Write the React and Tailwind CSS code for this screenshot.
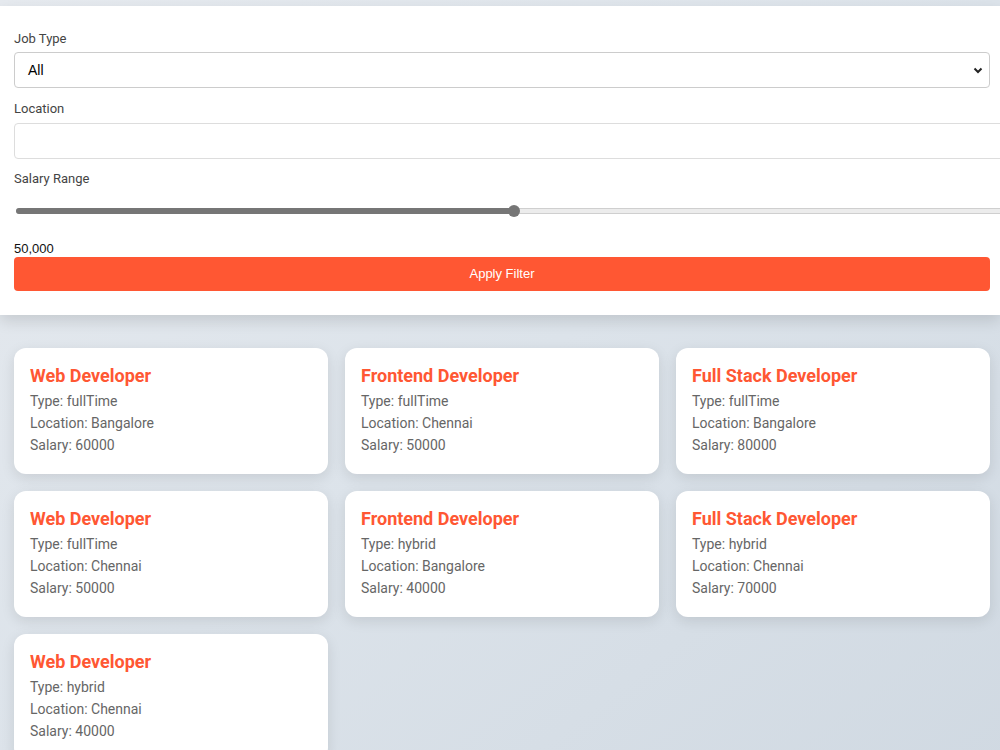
import React from "react";

const jobs = [
  { title: "Web Developer", type: "fullTime", location: "Bangalore", salary: 60000 },
  { title: "Frontend Developer", type: "fullTime", location: "Chennai", salary: 50000 },
  { title: "Full Stack Developer", type: "fullTime", location: "Bangalore", salary: 80000 },
  { title: "Web Developer", type: "fullTime", location: "Chennai", salary: 50000 },
  { title: "Frontend Developer", type: "hybrid", location: "Bangalore", salary: 40000 },
  { title: "Full Stack Developer", type: "hybrid", location: "Chennai", salary: 70000 },
  { title: "Web Developer", type: "hybrid", location: "Chennai", salary: 40000 },
];

export default function App() {
  return (
    <div className="min-h-[750px] w-full overflow-hidden bg-gradient-to-br from-[#e6eaef] via-[#dce3ea] to-[#d0d9e2] pt-[6px] font-['Roboto',sans-serif]">
      <div className="bg-white pl-[14px] pr-[10px] pt-[22px] pb-[24px] shadow-[0_6px_14px_rgba(0,0,0,0.12)]">
        <div className="pt-[1px] text-[13px] leading-[19px] text-[#444]">Job Type</div>
        <div className="mt-[4px] flex h-[36px] items-center justify-between rounded-[4px] border border-[#ccc] bg-white pl-[13px] pr-[4px] font-['Liberation_Sans',Arial,sans-serif] text-[14px] text-black">
          <span className="pt-[1px]">All</span>
          <svg width="12" height="12" viewBox="0 0 12 12" className="mr-[1px]">
            <path d="M2.5 4.5 L6 8 L9.5 4.5" fill="none" stroke="#222" strokeWidth="2" />
          </svg>
        </div>
        <div className="mt-[11px] text-[13px] leading-5 text-[#444]">Location</div>
        <div className="mt-[4px] h-[36px] w-[calc(100%+30px)] rounded-[4px] border border-[#ddd] bg-white"></div>
        <div className="mt-[10px] text-[13px] leading-5 text-[#444]">Salary Range</div>
        <div className="relative mt-[16px] ml-[2px] h-[12px] w-[calc(100%+40px)]">
          <div className="absolute left-0 right-0 top-[3px] h-[6px] rounded-full border border-[#cfcfcf] bg-[#ececec]"></div>
          <div className="absolute left-0 top-[3px] h-[6px] w-[498px] rounded-full bg-[#767676]"></div>
          <div className="absolute left-[492px] top-0 h-[12px] w-[12px] rounded-full bg-[#767676]"></div>
        </div>
        <div className="mt-[24px] font-['Liberation_Sans',Arial,sans-serif] text-[13px] leading-[15px] text-[#111]">50,000</div>
        <div className="mt-[1px] flex h-[34px] items-center justify-center rounded-[4px] bg-[#ff5733] font-['Liberation_Sans',Arial,sans-serif] text-[13px] text-white">
          Apply Filter
        </div>
      </div>

      <div className="grid grid-cols-3 gap-[17px] pl-[14px] pr-[10px] pt-[33px] pb-[20px]">
        {jobs.map((j, i) => (
          <div key={i} className="h-[126px] rounded-[12px] bg-white px-[16px] pt-[17px] shadow-[0_4px_14px_rgba(0,0,0,0.1)]">
            <div className="text-[18px] font-bold leading-[22px] text-[#ff5733]">{j.title}</div>
            <div className="mt-[3px] text-[14px] leading-[22px] text-[#666]">
              <div>Type: {j.type}</div>
              <div>Location: {j.location}</div>
              <div>Salary: {j.salary}</div>
            </div>
          </div>
        ))}
      </div>
    </div>
  );
}
